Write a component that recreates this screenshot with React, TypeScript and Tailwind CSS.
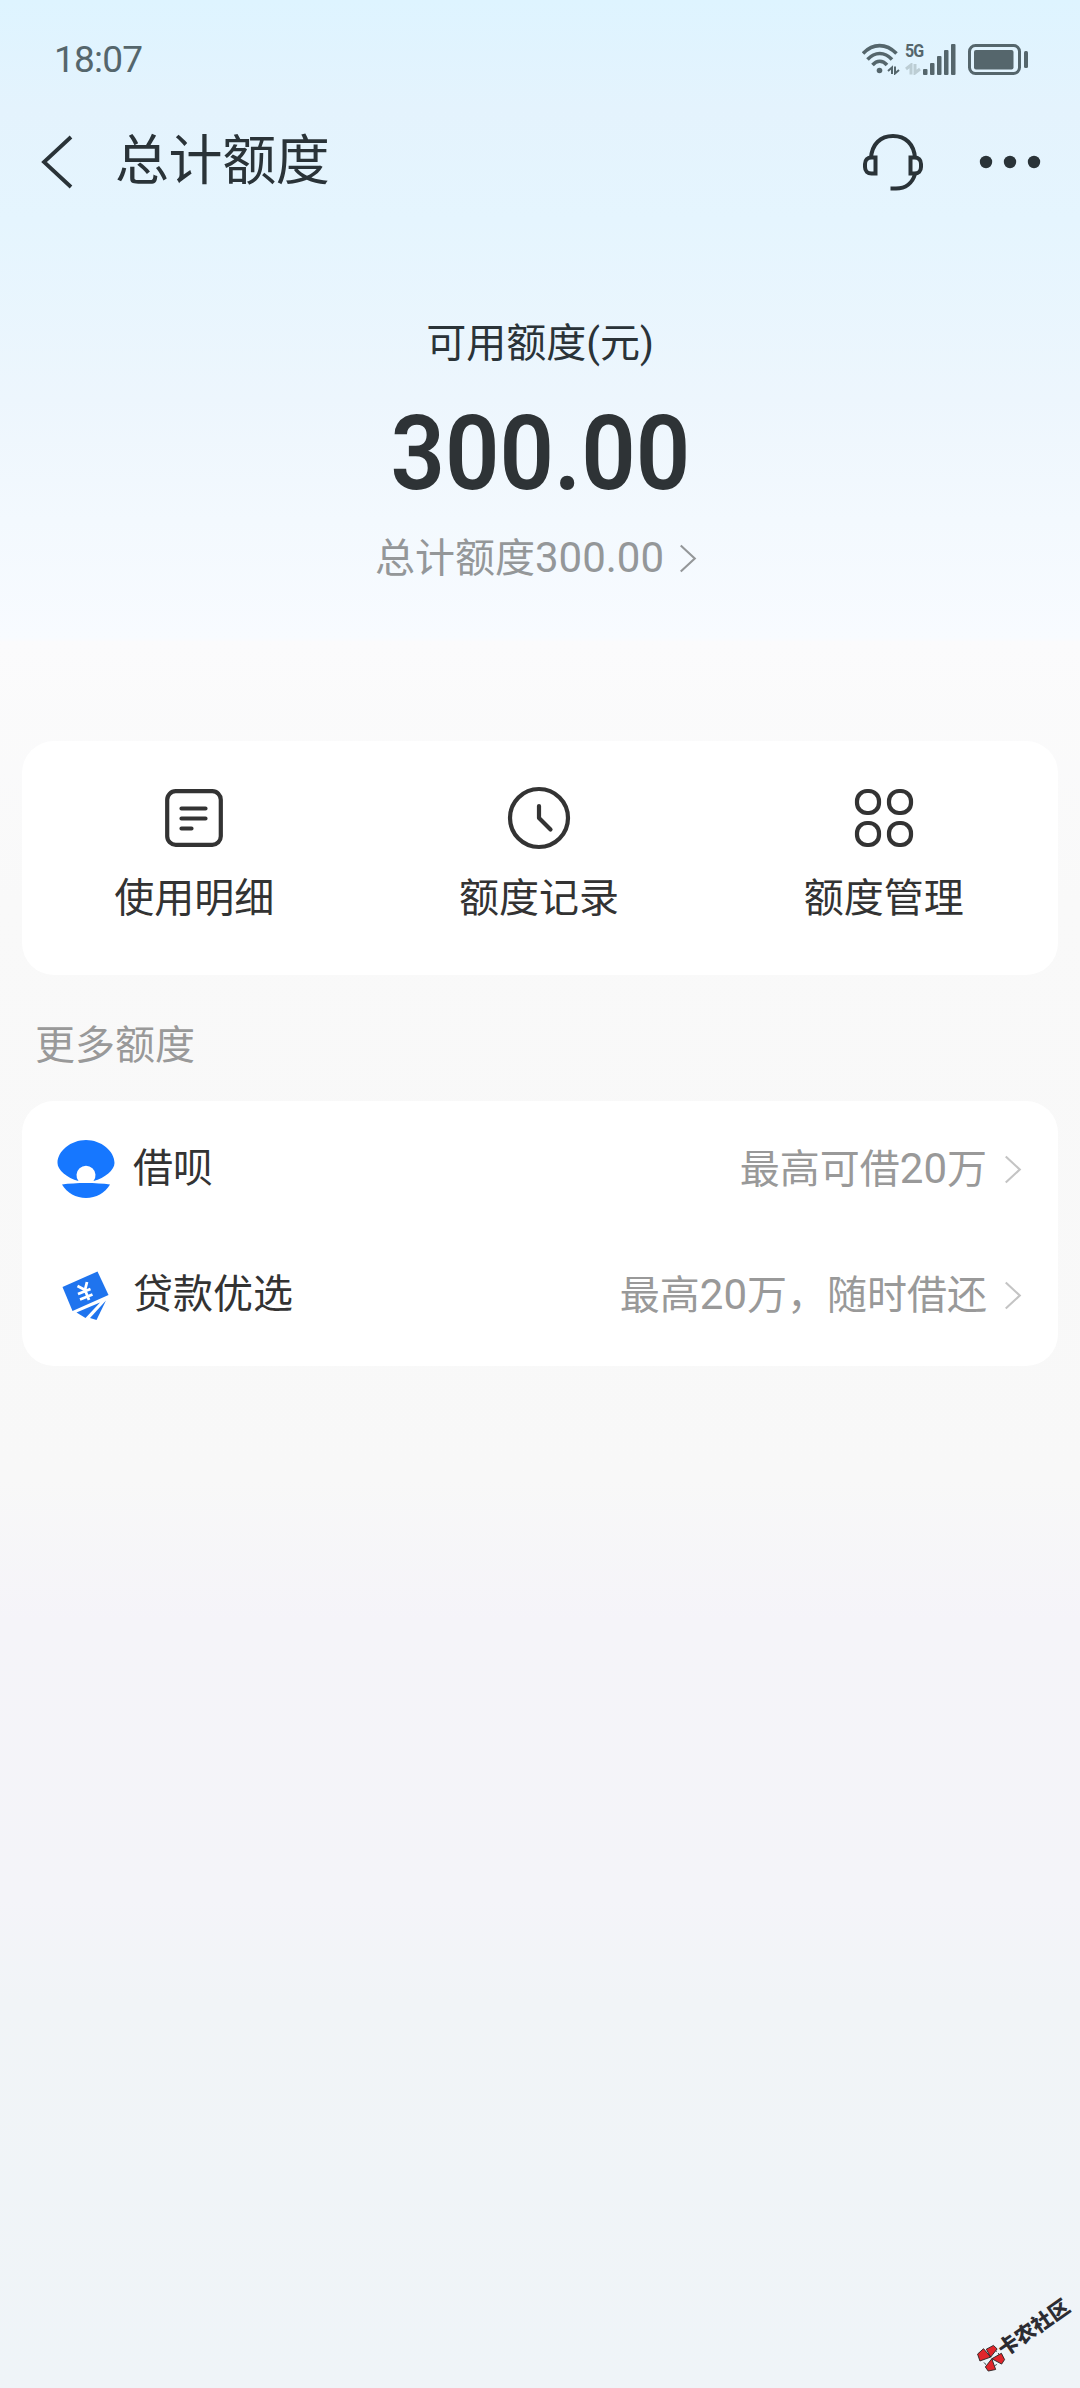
import React from 'react';

const StatusBar = () => (
  <div className="flex h-[118px] items-center justify-between pr-[52px] pl-[54px] text-[#55666c]">
    <span className="text-[37px] leading-none tracking-[-0.8px]">18:07</span>
    <div className="flex items-center">
      <svg className="h-8 w-[38px]" viewBox="0 0 38 32" fill="none" stroke="currentColor" strokeWidth="3.6">
        <path d="M1 10.500C11 0 24 0 34.500 10.500" />
        <path d="M5.500 16.500C13 8.500 22.500 8.500 30 16.500" />
        <path d="M10.500 22C15 17 20.500 17 25 22" />
        <circle cx="17.500" cy="27.500" r="2.800" fill="currentColor" stroke="none" />
        <path d="M30 31V24.500l-4 3.500M33 23.500v7l4-3.500" strokeWidth="2" />
      </svg>
      <div className="ml-[5px] flex h-8 w-[18px] flex-col justify-between">
        <span className="scale-y-110 text-[16px] leading-[15px] font-bold tracking-[-1px]">5G</span>
        <svg className="h-3 w-4" viewBox="0 0 16 12" fill="none" stroke="#bccdd4" strokeWidth="3">
          <path d="M6 11.500V2L1 6M10 1v9l5-4" />
        </svg>
      </div>
      <svg className="h-[31px] w-[33px]" viewBox="0 0 33 31" fill="currentColor">
        <rect x="0" y="25" width="4.500" height="6" rx="1" />
        <rect x="7" y="19" width="4.500" height="12" rx="1" />
        <rect x="14" y="12" width="4.500" height="19" rx="1" />
        <rect x="21" y="6" width="4.500" height="25" rx="1" />
        <rect x="28" y="0" width="4.500" height="31" rx="1" />
      </svg>
      <svg className="ml-3 h-[31px] w-[60px]" viewBox="0 0 60 31">
        <rect x="1.500" y="1.500" width="50" height="28" rx="6" fill="none" stroke="currentColor" strokeWidth="3" />
        <rect x="6" y="6" width="39.500" height="19.500" rx="2" fill="currentColor" />
        <rect x="56" y="7" width="4" height="17" rx="1.500" fill="currentColor" />
      </svg>
    </div>
  </div>
);

const NavBar = () => (
  <div className="flex h-[88px] items-center pr-[39px] pl-[40px] text-[#2a3338]">
    <svg className="h-[54px] w-[34px]" viewBox="0 0 34 54" fill="none" stroke="currentColor" strokeWidth="3.800">
      <path d="M31 2L4 27l27 25" />
    </svg>
    <h1 className="ml-[41px] text-[54px] leading-[88px] tracking-[-0.4px]">总计额度</h1>
    <svg className="ml-auto h-[58px] w-[62px]" viewBox="0 0 62 58" fill="none" stroke="currentColor" strokeWidth="4">
      <path d="M9 25C10 11 18.500 3 31 3s21 8 22 22" />
      <path d="M13.500 24.500v16h-4c-4 0-6.500-2.500-6.500-6.500v-3c0-4 2.500-6.500 6.500-6.500z" />
      <path d="M48.500 24.500v16h4c4 0 6.500-2.500 6.500-6.500v-3c0-4-2.500-6.500-6.500-6.500z" />
      <path d="M53 41c-2.500 9-9.500 14.500-19 14.500h-5.500" />
    </svg>
    <svg className="ml-[55px] h-[14px] w-[62px]" viewBox="0 0 62 14" fill="currentColor">
      <circle cx="7" cy="7" r="6.200" />
      <circle cx="31" cy="7" r="6.200" />
      <circle cx="55" cy="7" r="6.200" />
    </svg>
  </div>
);

const Chevron = ({ className }: { className: string }) => (
  <svg className={className} viewBox="0 0 18 30" fill="none" stroke="currentColor" strokeWidth="2.200">
    <path d="M1.500 1.500L16 15 1.500 28.500" />
  </svg>
);

const Digits = ({ children }: { children: React.ReactNode }) => (
  <span className="text-[42px] font-normal">{children}</span>
);

const actions = [
  {
    label: '使用明细',
    icon: (
      <>
        <rect x="5.200" y="5.200" width="53.600" height="53.600" rx="8.500" />
        <path d="M19.500 22.500h24M19.500 32.500h24M19.500 42.500h10" />
      </>
    ),
  },
  {
    label: '额度记录',
    icon: (
      <>
        <circle cx="32" cy="32" r="29" />
        <path d="M32 20v12l11.500 11.500" />
      </>
    ),
  },
  {
    label: '额度管理',
    icon: (
      <>
        <rect x="5" y="5" width="22" height="22" rx="10" />
        <rect x="37" y="5" width="22" height="22" rx="10" />
        <rect x="5" y="37" width="22" height="22" rx="10" />
        <rect x="37" y="37" width="22" height="22" rx="10" />
      </>
    ),
  },
];

const ShellIcon = () => (
  <svg className="h-[60px] w-[60px]" viewBox="0 0 60 60" fill="#1677ff">
    <path d="M22.500 42C11 39 1.500 31 1.500 24 1.500 12 15 1 30 1s28.500 11 28.500 23c0 7-9.500 15-21 18a9.500 9.500 0 1 0-15 0z" />
    <path d="M6 45.500c14-2 34-2 48 0C49 54 40 59 30 59S11 54 6 45.500z" />
  </svg>
);

const LoanIcon = () => (
  <svg className="h-[60px] w-[60px]" viewBox="0 0 60 60" fill="#1f74ee">
    <path d="M6.500 22L41.500 6.500 52.500 30 16.500 46z" />
    <path d="M20.500 47.500L44 37.500 29.500 53z" />
    <path d="M34 53L50 35.500 40.500 55z" />
    <path
      d="M21.500 21l7.500 4 2-8M22 29l12.500-5M24 34.500l12.500-5M29 25l4 10"
      fill="none"
      stroke="#fff"
      strokeWidth="2.800"
    />
  </svg>
);

const App = () => {
  return (
    <div className="relative h-[2388px] w-[1080px] overflow-hidden bg-[linear-gradient(180deg,#def4ff_0px,#e4f3fd_110px,#e5f5fe_220px,#edf6fd_400px,#f3f9fe_520px,#f8fbff_638px,#fbfbfc_642px,#f9f9f9_900px,#f8f8f8_1480px,#f5f4f9_1620px,#f4f4f9_1900px,#f1f4f7_2000px,#eff4f8_2388px)] font-[Roboto,'Noto_Sans_CJK_SC',sans-serif] text-[#333]">
      <StatusBar />
      <NavBar />

      <section className="mt-[110px] flex flex-col items-center">
        <div className="text-[40px] leading-[56px] text-[#2a3338]">可用额度(元)</div>
        <div className="mt-[22px] scale-x-[0.918] text-[104px] leading-[120px] font-semibold text-[#2e3336]">300.00</div>
        <div className="mt-[13px] mr-[8px] flex items-center text-[40px] leading-[62px] text-[#949799]">
          <span>
            总计额度<Digits>300.00</Digits>
          </span>
          <Chevron className="ml-[15px] h-[29px] w-[18px]" />
        </div>
      </section>

      <section className="mx-[22px] mt-[151px] grid h-[234px] grid-cols-3 rounded-[32px] bg-white pt-[45px] pr-[2px]">
        {actions.map((action) => (
          <div key={action.label} className="flex flex-col items-center">
            <svg
              className="h-16 w-16"
              viewBox="0 0 64 64"
              fill="none"
              stroke="currentColor"
              strokeWidth="4.200"
              strokeLinecap="round"
              strokeLinejoin="round"
            >
              {action.icon}
            </svg>
            <span className="mt-[19px] text-[40px] leading-[60px]">{action.label}</span>
          </div>
        ))}
      </section>

      <h2 className="mt-[41px] pl-[35px] text-[40px] leading-[60px] text-[#999]">更多额度</h2>

      <section className="mx-[22px] mt-[25px] flex h-[265px] flex-col rounded-[32px] bg-white pt-[5px] pr-[36px] pl-[34px]">
        <div className="flex h-[126px] items-center">
          <ShellIcon />
          <span className="ml-[17px] text-[40px] leading-[60px]">借呗</span>
          <span className="ml-auto text-[40px] leading-[60px] text-[#999]">
            最高可借<Digits>20</Digits>万
          </span>
          <Chevron className="ml-[17px] h-[29px] w-[18px] text-[#c4c4c4]" />
        </div>
        <div className="flex h-[126px] items-center">
          <LoanIcon />
          <span className="ml-[17px] text-[40px] leading-[60px]">贷款优选</span>
          <span className="ml-auto text-[40px] leading-[60px] text-[#999]">
            最高<Digits>20</Digits>万，随时借还
          </span>
          <Chevron className="ml-[17px] h-[29px] w-[18px] text-[#c4c4c4]" />
        </div>
      </section>

      {/* community watermark */}
      <div className="absolute right-[3px] bottom-[40px] flex -rotate-[35deg] items-center">
        <svg className="mr-[-2px] h-[26px] w-[26px]" viewBox="0 0 26 26" stroke="#222" strokeWidth="0.8">
          <circle cx="13" cy="13" r="8.500" fill="#eaf6fa" strokeDasharray="3 3" />
          <path d="M13 12L12 1 4 2 2 9zM13 12l1-9 8 1 1 5zM13 14l11 1-1 7-5 2zM13 14L10 25 3 22 3 17z" fill="#e0262b" />
        </svg>
        <span className="text-[20.5px] leading-none font-black text-[#2c2c32]">卡农社区</span>
      </div>
    </div>
  );
};

export default App;
